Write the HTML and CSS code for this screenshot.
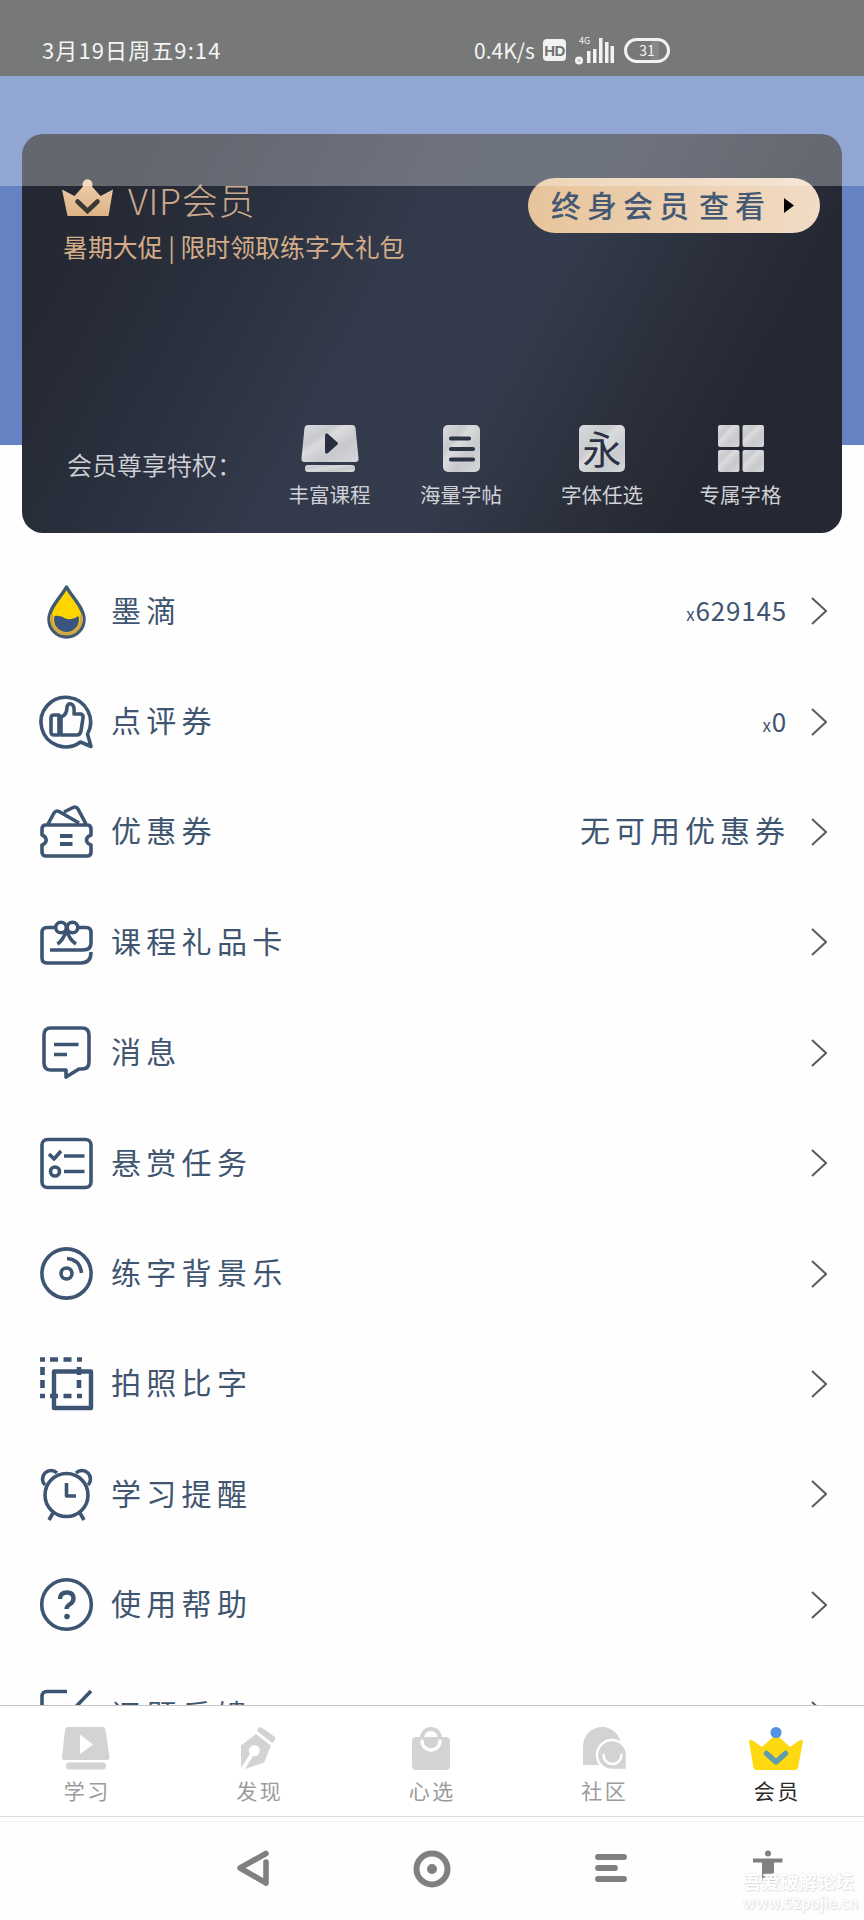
FILE: index.html
```html
<!DOCTYPE html>
<html lang="zh-CN">
<head>
<meta charset="utf-8">
<title>会员</title>
<link rel="stylesheet" href="styles.css">
</head>
<body>
<svg class="defs" width="0" height="0">
  <defs>
    <linearGradient id="silver" x1="0" y1="0" x2="1" y2="1">
      <stop offset="0" stop-color="#d9dadd"/><stop offset=".3" stop-color="#c9cacd"/><stop offset=".4" stop-color="#dcdcdf"/><stop offset=".65" stop-color="#c8c9cc"/><stop offset="1" stop-color="#d6d7da"/>
    </linearGradient>
    <linearGradient id="gold" x1="0" y1="0" x2="0" y2="1">
      <stop offset="0" stop-color="#f0cfae"/><stop offset="1" stop-color="#dcb384"/>
    </linearGradient>
    <symbol id="chev" viewBox="0 0 16 28"><path d="M1 1l14 13L1 27" fill="none" stroke="#5b5b5b" stroke-width="2"/></symbol>
  </defs>
</svg>
<div class="screen">
  <header class="status">
    <span class="date">3月19日周五9:14</span>
    <div class="signals">
      <span class="speed">0.4K/s</span>
      <span class="hd">HD</span>
      <svg class="signal" width="40" height="32" viewBox="0 0 40 32">
        <text x="4" y="11" class="net">4G</text>
        <g fill="#f1f2f1"><circle cx="4" cy="27.500" r="4"/><rect x="12" y="18" width="3.500" height="12"/><rect x="18" y="16" width="3.500" height="14"/><rect x="24" y="5" width="3.500" height="25"/><rect x="30" y="9" width="3.500" height="21"/><rect x="35.500" y="13" width="3.500" height="17"/></g>
        <circle cx="4" cy="27.500" r="1.300" fill="#bbb"/>
      </svg>
      <span class="battery">31</span>
    </div>
  </header>
  <section class="hero">
    <div class="card">
      <div class="card-top">
        <div class="vip">
          <div class="vip-name">
            <svg width="51" height="39" viewBox="0 0 51 39"><path d="M0 11.500L12.500 18 21 8.500a5 5 0 1 1 9 0L38.500 18 51 11.500 46.500 38h-41z" fill="url(#gold)"/><path d="M15.500 23.500l10 9.500 10-9.500" fill="none" stroke="#3b3936" stroke-width="4.600" stroke-linecap="round"/></svg>
            <span class="vip-title">VIP会员</span>
          </div>
          <p class="promo">暑期大促 | 限时领取练字大礼包</p>
        </div>
        <a class="pill"><span>终身会员</span><span>查看</span><svg width="10" height="15" viewBox="0 0 10 15"><path d="M0 0l10 7.500L0 15z"/></svg></a>
      </div>
      <div class="perks">
        <span class="perks-label">会员尊享特权：</span>
        <div class="perk perk-a">
          <svg width="58" height="47" viewBox="0 0 58 47" fill="url(#silver)"><path d="M7 0h44q3 0 3.500 3l3 30q.5 4-3 4h-51q-3.500 0-3-4l3-30Q4 0 7 0z"/><rect x="4" y="40" width="50" height="7" rx="3"/><path d="M24 11q0-4 3-2l9 8q2 1.500 0 3l-9 8q-3 2-3-2z" fill="#2a2f3f"/></svg>
          <span>丰富课程</span>
        </div>
        <div class="perk perk-b">
          <svg width="37" height="47" viewBox="0 0 37 47"><rect width="37" height="47" rx="5" fill="url(#silver)"/><path d="M8 13.500h18M8 24h22M8 34.500h22" stroke="#2d3445" stroke-width="4.200" stroke-linecap="round"/></svg>
          <span>海量字帖</span>
        </div>
        <div class="perk perk-c">
          <span class="glyph">永</span>
          <span>字体任选</span>
        </div>
        <div class="perk perk-d">
          <svg width="46" height="47" viewBox="0 0 46 47" fill="url(#silver)"><rect width="21.500" height="22" rx="2"/><rect x="24.500" width="21.500" height="22" rx="2"/><rect y="25" width="21.500" height="22" rx="2"/><rect x="24.500" y="25" width="21.500" height="22" rx="2"/></svg>
          <span>专属字格</span>
        </div>
      </div>
    </div>
  </section>
  <main class="list">
    <div class="row"><svg class="ico" viewBox="0 0 53 53"><path d="M26.500 2C21 12 9 23 9 34.500a17.500 17.500 0 0 0 35 0C44 23 32 12 26.500 2z" fill="#ffd500" stroke="#415a73" stroke-width="3.500" stroke-linejoin="round"/><path d="M12 30a15 15 0 1 0 29 0" fill="none" stroke="#d2a746" stroke-width="3"/><path d="M14.500 31q6-1 11 2.500 5 2.500 13-2.500a12.500 12.500 0 1 1-24 0z" fill="#3a5580" stroke="none"/></svg><span class="name">墨滴</span><span class="val"><small>x</small>629145</span><svg class="chev"><use href="#chev"/></svg></div>
    <div class="row"><svg class="ico" viewBox="0 0 53 53"><path d="M40.500 47A24.800 24.800 0 1 1 47.500 39L51 51.500z"/><path d="M11 23q0-3 3-3h5v20h-5q-3 0-3-3zM21 22q6-2 6-10 1-4 4-3 4 1 3 10h7q2.500 1 2 4l-2 13q-1 4-4 4H21z"/></svg><span class="name">点评券</span><span class="val"><small>x</small>0</span><svg class="chev"><use href="#chev"/></svg></div>
    <div class="row"><svg class="ico" viewBox="0 0 53 53"><path d="M6 20h41q4 0 4 4v6q-6 2.500-4 7 1 2 4 3v7q0 4-4 4H6q-4 0-4-4v-7q5-2 4-6-1-3-4-4v-6q0-4 4-4zM8 19l6-11q2-3 5-1.500L39 18M24 7l9-4.500q3-1.500 5 1.500l8 15"/><path d="M20 31h12.500M20 39h12.500" stroke-width="4"/></svg><span class="name">优惠券</span><span class="val wide">无可用优惠券</span><svg class="chev"><use href="#chev"/></svg></div>
    <div class="row"><svg class="ico" viewBox="0 0 53 53"><path d="M14 11.500H7q-5 0-5 5V42q0 5 5 5h34q10 0 10-11M10 34h33q8 0 8-7V16.500q0-5-5-5h-7"/><circle cx="21" cy="11.500" r="5.300"/><circle cx="32.500" cy="11.500" r="5.300"/><path d="M26.500 14q-3 10-9 14M26.500 14q3 10 9.500 14"/></svg><span class="name">课程礼品卡</span><svg class="chev"><use href="#chev"/></svg></div>
    <div class="row"><svg class="ico" viewBox="0 0 53 53"><path d="M11 2h31q7 0 7 7v27q0 7-7 7h-3l-13 8v-7H11q-7 0-7-7V9q0-7 7-7zM14 18.500h24.500M14 28.500h13"/></svg><span class="name">消息</span><svg class="chev"><use href="#chev"/></svg></div>
    <div class="row"><svg class="ico" viewBox="0 0 53 53"><rect x="2" y="2.500" width="49" height="48" rx="5.500"/><path d="M9 17l5 5 7-8M24 19h20.500M24 34.500h20.500"/><circle cx="15" cy="34.500" r="4.500"/></svg><span class="name">悬赏任务</span><svg class="chev"><use href="#chev"/></svg></div>
    <div class="row"><svg class="ico" viewBox="0 0 53 53"><circle cx="26.500" cy="26.500" r="24.600"/><circle cx="26.500" cy="26.500" r="5.500"/><path d="M27 11.500q13 1 14.500 14.500"/></svg><span class="name">练字背景乐</span><svg class="chev"><use href="#chev"/></svg></div>
    <div class="row"><svg class="ico" viewBox="0 0 53 53"><path d="M14 14.500h37v36.500H14z" stroke-width="4.400"/><path d="M0 2.500h5M10 2.500h8M23.500 2.500h8M37 2.500h5M0 39h5M10 39h8M23.500 39h8M37 39h5M2.500 10v8M2.500 23v8M39 10v8M39 23v8" stroke-width="4.600"/></svg><span class="name">拍照比字</span><svg class="chev"><use href="#chev"/></svg></div>
    <div class="row"><svg class="ico" viewBox="0 0 53 53"><circle cx="26.500" cy="27" r="21.500"/><path d="M5 17a8 8 0 1 1 12-12M48 17a8 8 0 1 0-12-12M13 45l-4 7M40 45l4 7M26.500 15v13H36"/></svg><span class="name">学习提醒</span><svg class="chev"><use href="#chev"/></svg></div>
    <div class="row"><svg class="ico" viewBox="0 0 53 53"><circle cx="26.500" cy="26.500" r="24.800"/><path d="M20 21q0-6.500 7-6.500 6.500 0 6.500 6 0 3.500-4 6-3 2-3 4.500" stroke-width="4.400"/><circle cx="27" cy="38.500" r="2.800" fill="#3d5572" stroke="none"/></svg><span class="name">使用帮助</span><svg class="chev"><use href="#chev"/></svg></div>
    <div class="row"><svg class="ico" viewBox="0 0 53 53"><path d="M27 2.500H7q-5 0-5 5V46q0 5 5 5h38q5 0 5-5V28M51 2L26 28"/></svg><span class="name">问题反馈</span><svg class="chev"><use href="#chev"/></svg></div>
  </main>
  <nav class="tabs">
    <a class="tab"><svg width="56" height="44" viewBox="0 0 56 44" fill="#d3d3d3"><path d="M8 1h34q3 0 3.500 3l4 27q.5 3-3 3H5q-3.500 0-3-3L5 4q.5-3 3-3z" transform="translate(2)"/><rect x="8" y="36.500" width="40" height="7" rx="3.500"/><path d="M22 8.500l13 10-13 9.500z" fill="#fff"/></svg><span>学习</span></a>
    <a class="tab"><svg width="56" height="44" viewBox="0 0 56 44" fill="#d3d3d3"><path d="M10 19.500L25 8l15 11.500-7 17L14 43l8-13a5.500 5.500 0 1 0-3-2L10 42z"/><path d="M30 1l14 10q1 4-3 6L26 5q1-4 4-4z"/></svg><span>发现</span></a>
    <a class="tab"><svg width="56" height="44" viewBox="0 0 56 44"><rect x="9" y="11" width="38" height="33" rx="4" fill="#d3d3d3"/><path d="M19 15v-3a9 9 0 0 1 18 0v3" fill="none" stroke="#d3d3d3" stroke-width="4"/><path d="M19 15a9 9 0 0 0 18 0" fill="none" stroke="#fff" stroke-width="3.400" stroke-linecap="round"/></svg><span>心选</span></a>
    <a class="tab"><svg width="56" height="44" viewBox="0 0 56 44"><path d="M7 39V20a19 19 0 1 1 19 19z" fill="#d3d3d3"/><path d="M51 44V29a15 15 0 1 0-15 15z" fill="#d3d3d3" stroke="#fff" stroke-width="2.400"/><path d="M27.500 29a9 9 0 0 0 18 0" fill="none" stroke="#fff" stroke-width="2.600" stroke-linecap="round"/></svg><span>社区</span></a>
    <a class="tab active"><svg width="56" height="44" viewBox="0 0 56 44"><path d="M1 15q1-2 3-1l10 7 11-10h6l11 10 10-7q2-1 3 1l-5 27q-.5 2-3 2H9q-3 0-3.500-2z" fill="#ffd90f"/><circle cx="28" cy="6.500" r="5.500" fill="#5292e4"/><path d="M18.500 27.500l9.500 8.500 9.500-8.500" fill="none" stroke="#609bac" stroke-width="5.500" stroke-linecap="round" stroke-linejoin="round"/></svg><span>会员</span></a>
  </nav>
  <footer class="sysnav">
    <svg class="back" width="32" height="38" viewBox="0 0 32 38"><path d="M29 3.500L3 18l26 15V12" fill="none" stroke="#808080" stroke-width="5.600" stroke-linecap="round" stroke-linejoin="round"/></svg>
    <svg class="home" width="38" height="38" viewBox="0 0 38 38"><circle cx="19" cy="19" r="15.500" fill="none" stroke="#808080" stroke-width="6"/><circle cx="19" cy="19" r="5" fill="#808080"/></svg>
    <svg class="menu" width="32" height="28" viewBox="0 0 32 28"><path d="M3 3h26M3 14h17M3 25h26" stroke="#808080" stroke-width="5.800" stroke-linecap="round"/></svg>
    <svg class="person" width="30" height="36" viewBox="0 0 30 36" fill="#808080"><circle cx="15" cy="3.500" r="3"/><path d="M0 8.500h29.500v4H21V31h-4V25h-4v6H9V12.500H0z"/></svg>
    <div class="mark"><span class="mark-name">吾爱破解论坛</span><span class="mark-url">www.52pojie.cn</span></div>
  </footer>
  <div class="shade"></div>
</div>
</body>
</html>
```
FILE: styles.css
```css
* { box-sizing: border-box; }
body { margin: 0; background: #fff; font-family: "Noto Sans CJK SC", sans-serif; }
.defs { display: block; position: absolute; }
.screen { position: relative; width: 864px; height: 1920px; overflow: hidden; display: flex; flex-direction: column; background: #fefefe; }
svg { flex: none; }

/* translucent band behind the status bar */
.shade { position: absolute; left: 0; top: 76px; width: 864px; height: 110px; background: rgba(255,255,255,.29); }

.status { flex: none; height: 76px; display: flex; background: #777978; color: #f4f5f4; padding-top: 33px; line-height: 32px; }
.date { width: 432px; padding-left: 42px; font-size: 22px; letter-spacing: 1.100px; white-space: nowrap; }
.signals { display: flex; align-items: center; height: 34px; }
.speed { width: 68px; margin-left: 42px; font-size: 21px; white-space: nowrap; }
.hd { width: 23px; height: 22px; border-radius: 4px; background: #f1f2f1; color: #6f7170; font: bold 15px/23px "Liberation Sans", sans-serif; text-align: center; letter-spacing: -.5px; margin-left: 1px; }
.signal { margin-left: 9px; margin-top: -2px; }
.net { font-size: 9px; fill: #f1f2f1; }
.battery { width: 46px; height: 25px; margin-left: 9px; border: 3px solid #f1f2f1; border-radius: 13px; font-size: 14px; line-height: 18px; text-align: center; background: linear-gradient(90deg, #777978 60%, #878988 60%, #878988 80%, #777978 80%); background-clip: padding-box; }

.hero { flex: none; height: 369px; padding: 58px 22px 0; background: #6582c2; }
.card { height: 399px; border-radius: 21px; background: linear-gradient(118deg, #252934 12%, #2a303e 27%, #333a4b 43%, #343b4c 58%, #2b303c 72%, #252832 84%); display: flex; flex-direction: column; justify-content: space-between; }
.card-top { display: flex; justify-content: space-between; padding: 44px 22px 0 40px; }
.vip-name { display: flex; align-items: flex-start; height: 42px; }
.vip-title { margin-left: 15px; font-size: 36px; line-height: 43px; font-weight: 200; color: #cba98c; letter-spacing: .7px; }
.promo { margin: 9px 0 0 1px; font-size: 24.900px; line-height: 34px; color: #d3ad87; white-space: nowrap; }
.pill { width: 292px; height: 55px; border-radius: 28px; background: linear-gradient(100deg, #e7c49a, #f2dcc6); display: flex; align-items: center; color: #455873; font-size: 30px; font-weight: 500; letter-spacing: 6px; padding-left: 23px; white-space: nowrap; }
.pill span { margin-top: -4px; }
.pill span + span { margin-left: 4px; }
.pill svg { margin-left: 13px; }
.perks { display: flex; height: 110px; color: #cfd1d7; }
.perks-label { width: 242px; padding-left: 45px; padding-top: 23px; font-size: 25px; line-height: 36px; font-weight: 350; white-space: nowrap; }
.perk { display: flex; flex-direction: column; align-items: center; width: 131px; font-size: 20.500px; line-height: 30px; gap: 7px; padding-top: 2px; white-space: nowrap; }
.perk-b { width: 132px; }
.perk-c { width: 150px; }
.perk-d { width: 127px; }
.glyph { width: 46px; height: 47px; border-radius: 5px; background: linear-gradient(135deg, #d9dadd, #c9cacd 35%, #dcdcdf 45%, #c9cacd 70%, #d6d7da); color: #2a3145; font-size: 39px; line-height: 45px; text-align: center; }

.list { flex: none; height: 1260px; padding: 111px 37px 0 40px; overflow: hidden; }
.row { height: 110.400px; display: flex; align-items: center; color: #3f5570; }
.ico { width: 53px; height: 53px; overflow: visible; fill: none; stroke: #3d5572; stroke-width: 3.600; stroke-linecap: butt; stroke-linejoin: round; }
.name { margin-left: 18px; margin-top: -5px; font-size: 30px; letter-spacing: 5.300px; flex: 1; }
.val { font-size: 26px; letter-spacing: .8px; margin-top: -3px; margin-right: 24px; }
.val small { font-size: 17px; }
.wide { font-size: 30px; letter-spacing: 5px; margin-right: 21px; margin-top: -5px; }
.chev { width: 16px; height: 28px; }

.tabs { flex: none; height: 112px; border-top: 1px solid #c6c6c6; border-bottom: 1px solid #dedede; display: grid; grid-template-columns: repeat(5, 172.500px); padding-top: 20px; background: #fff; }
.tab { display: flex; flex-direction: column; align-items: center; gap: 5px; color: #9b9b9b; font-size: 21px; line-height: 30px; letter-spacing: 2.500px; }
.tab span { padding-left: 2px; }
.active { color: #2b2b2b; }

.sysnav { flex: 1; margin-top: 4px; border-top: 1px solid #f4f4f4; display: grid; grid-template-columns: 237px 176px 182px 158px 111px; padding-top: 28px; height: 98px; align-items: start; }
.back { grid-column: 2; }
.home { grid-column: 3; }
.menu { grid-column: 4; margin-top: 4px; }
.person { grid-column: 5; }
.mark { position: absolute; left: 743px; top: 1869px; display: flex; flex-direction: column; color: #fff; text-shadow: 0 0 2px #dadada, 1px 1px 1px #e2e2e2; white-space: nowrap; }
.mark-name { font-size: 18.500px; line-height: 25px; font-weight: 700; }
.mark-url { font-size: 15px; line-height: 17px; font-weight: 500; }
```
